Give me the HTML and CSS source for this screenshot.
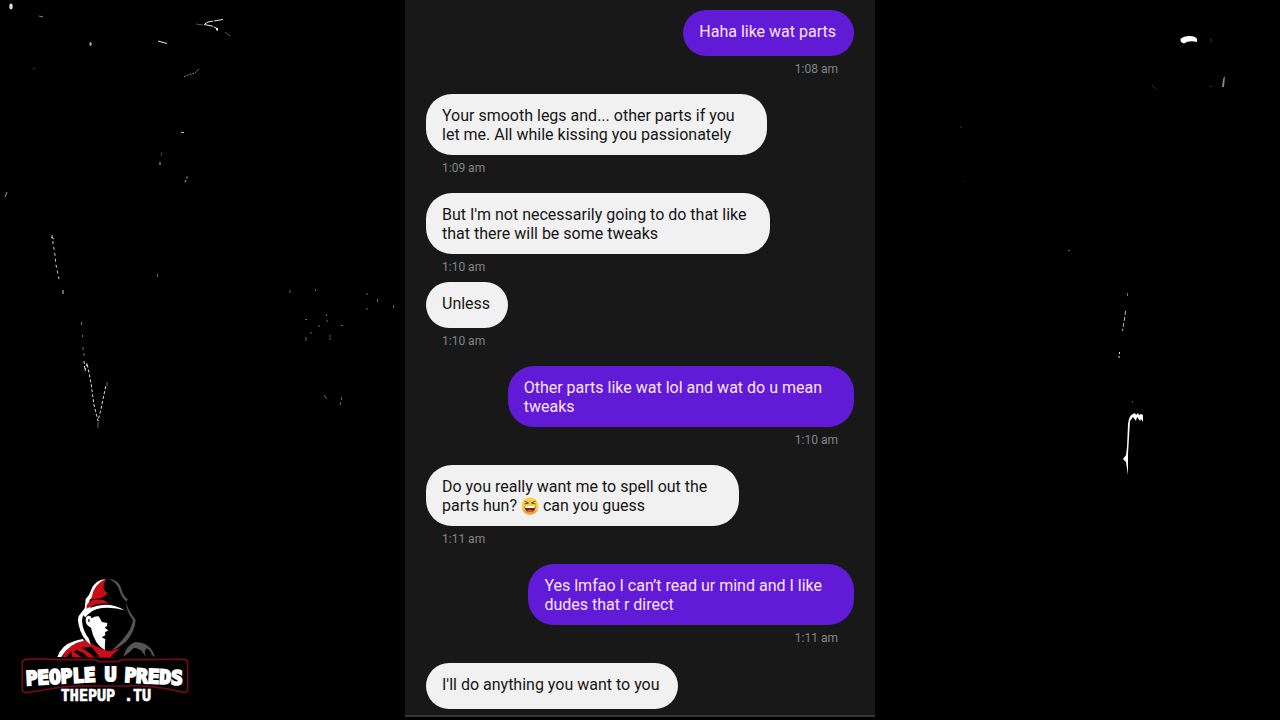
FILE: index.html
```
<!DOCTYPE html>
<html lang="en">
<head>
    <meta charset="UTF-8">
    <meta name="viewport" content="width=device-width, initial-scale=1.0">
    <title>People U Preds</title>
    <link rel="stylesheet" href="styles.css">
</head>
<body>
    <svg class="splatter" viewBox="0 0 1280 720" preserveAspectRatio="xMidYMin slice" aria-hidden="true">
        <!-- left side -->
        <ellipse cx="11" cy="6.500" rx="1.700" ry="3" fill="#ddd"/>
        <path d="M39 16l4 1" stroke="#888"/>
        <ellipse cx="90.500" cy="44" rx="1.200" ry="2" fill="#aaa"/>
        <path d="M158 41l9 2.500" stroke="#eee"/>
        <path d="M33 70l2-3" stroke="#333"/>
        <path d="M223 19.500l-15 2.500-4 2.500 8 1.500 6 3" stroke="#eee" stroke-dasharray="9 1"/>
        <path d="M196 24l7 1M225 32l5 4" stroke="#555"/>
        <path d="M216 28l2 0 0 3-2-1z" fill="#eee"/>
        <path d="M184 77l4-2 7-2 4-4" stroke="#888" stroke-dasharray="2 1"/>
        <path d="M181 132.500h3M160 162v3M187 176.500v2M185 182l1-2" stroke="#bbb"/>
        <path d="M161 156l1-4" stroke="#444"/>
        <path d="M5 197l2-5" stroke="#999"/>
        <path d="M52 235l1 8 2 12 1 10 3 14" stroke="#ccc" stroke-dasharray="3 3"/>
        <path d="M51 237l3 2M63 290v4" stroke="#ccc"/>
        <path d="M81.500 322v3M82.500 335v2M83 347v3M84 353v3" stroke="#777"/>
        <path d="M84 361l1 10 2-8 4 20 3 22 4 16 3-12 5-24" stroke="#ddd" stroke-dasharray="3 2"/>
        <path d="M98 422v6M107 382v4" stroke="#666"/>
        <path d="M157.500 274v3M290 290v3M315.500 289v2M305 319.500h2M326.500 314v2M327 320v2M318 326h2M341 325.500h2M311 332v2M306 337v4M329 336h2M329 339h2M367 293v2M377.500 299v3M393.500 305v3M366 309h2M324 395l3 4M341.500 397v3M340.500 402v3" stroke="#666"/>
        <!-- right side -->
        <path d="M1180.500 39q3-3 9-3 6 0 7.500 3v3q-8-2-13 1.500-4-1-3.500-4.500z" fill="#fff"/>
        <path d="M1211 38v5M1152 85l4 4M1209 86l3 1M963 181v1M960 127h2" stroke="#333"/>
        <path d="M1222 87l1-8 2-3-1 11z" fill="#888"/>
        <path d="M1068 250l2 1M1127.500 293v3" stroke="#777"/>
        <path d="M1125.500 311l-1 8-2 12" stroke="#bbb" stroke-dasharray="4 2"/>
        <path d="M1119.500 352v2M1118 357h2" stroke="#ddd"/>
        <path d="M1132.500 401v2" stroke="#444"/>
        <path d="M1128 424q1-9 5-10l2-1 1 2 2-2 1 2 2-1 2 1v7l-2-3-1 2-3-4-1 4-3-4-3 4q-1 16-2 33v21l-2-13-3-3 3-4 1-8z" fill="#fff"/>
    </svg>
    <main class="page">
        <aside class="brand">
            <svg class="logo" viewBox="0 0 570 420" role="img" aria-label="People U Preds">
                <!-- cloak -->
                <path fill="#c80d16" d="M158 261q12-35 60-48l12-2q28 22 60 31l13 2 34-12-26 31z"/>
                <path fill="#000" d="M170 262l13-20 4 20zM192 246l23 16h18l-12-12-22-10zM213 232l26 17 14 13h16l-24-31zM300 262l30-28 12-4-22 32z"/>
                <path fill="#fff" d="M142 261q12-36 52-48 14-5 25-6l3 5q-46 9-68 49z"/>
                <path fill="#555" d="M340 260q8-34 35-44 22 0 38 11 17 13 22 35l-10-8q-3-13-15-19-8 8-5 17l5 11-17-22q-15-9-23-7-7 11-30 26z"/>
                <!-- hood -->
                <path fill="#000" d="M245 63l44-35 39 30 21 38 27 55-17 50-59 41-53-20-37-60 2-35z"/>
                <path fill="#c80d16" d="M288 29q-17 26 5 41-20 22-54 17-14 7-2-9 14-40 51-49z"/>
                <path fill="#fff" d="M288 27q-34 2-45 34-4 15-16 26l-3 28-18 23q-5 12 0 26 8 40 36 60l-5-18q-19-23-21-53 0-18 16-29 12-9 9-16l-6-6q4-14 10-20 6-40 43-55z"/>
                <path fill="#c80d16" d="M230 105l12-13q24-7 40-1l15 10q-38-3-67 15z"/>
                <path fill="#fff" d="M218 134q20-28 65-30 38 0 60 17-28-10-67-7-30 3-50 28z"/>
                <path fill="#555" d="M296 27q31 2 38 30 3 17 19 31l-4 7q-16-14-22-38-7-20-31-30zM347 98q10 27 30 52-3 35-27 63-21 20-47 30 40-35 58-67 6-14 8-25-18-24-22-53z"/>
                <!-- face -->
                <path fill="#fff" d="M228 142q4-6 13-4l4 7q9-7 21-6l10 17 16 3-1 9-7 5 11 8-10 6 1 9-11 6 11 6q-2 22-1 32-18-10-26-24l-10-20-6-23q-20-8-15-31z"/>
                <path fill="#000" d="M235 148q3-3 4 2l-1 7-3-2z"/>
                <!-- wordmark -->
                <path class="logo-plate" d="M47 268q48-3 100 1h106q8 0 14 6h58q6-6 16-6h75q60-2 108-1 9 2 9 12v77q-1 12-12 10-50-12-96-17-35-4-84-2h-92q-44-2-86 3-50 6-112 17-14 1-14-12v-76q0-10 10-12z"/>
                <text class="logo-name" x="152" y="340" transform="rotate(-3 152 320)">PEOPLE</text>
                <text class="logo-name" x="302" y="332">U</text>
                <text class="logo-name" x="431" y="340" transform="rotate(3 431 320)">PREDS</text>
                <text class="logo-site" x="288" y="394">THEPUP .TU</text>
            </svg>
        </aside>
        <section class="chat">
            <div class="message sent">
                <p class="bubble">Haha like wat parts</p>
                <time class="time">1:08 am</time>
            </div>
            <div class="message">
                <p class="bubble loose">Your smooth legs and... other parts if you<br>let me. All while kissing you passionately</p>
                <time class="time">1:09 am</time>
            </div>
            <div class="message grouped">
                <p class="bubble wide">But I'm not necessarily going to do that like<br>that there will be some tweaks</p>
                <time class="time">1:10 am</time>
            </div>
            <div class="message">
                <p class="bubble">Unless</p>
                <time class="time">1:10 am</time>
            </div>
            <div class="message sent">
                <p class="bubble loose">Other parts like wat lol and wat do u mean<br>tweaks</p>
                <time class="time">1:10 am</time>
            </div>
            <div class="message">
                <p class="bubble loose">Do you really want me to spell out the<br>parts hun? <svg class="emoji" viewBox="0 0 36 36" role="img" aria-label="laughing">
                    <circle cx="18" cy="18" r="17" fill="#f9cf4a"/>
                    <path d="M2 24a17 17 0 0 0 32 0q-16 12-32 0z" fill="#eaa437"/>
                    <path d="M7 18h22q0 12-11 12T7 18z" fill="#6b2418"/>
                    <path d="M8 18h20l-1 4H9z" fill="#fff"/>
                    <path d="M12 28q6-5 12 0-6 4-12 0z" fill="#ef5148"/>
                    <path d="M7 8l8 4-8 2M29 8l-8 4 8 2" fill="none" stroke="#6b4220" stroke-width="2"/>
                </svg> can you guess</p>
                <time class="time">1:11 am</time>
            </div>
            <div class="message sent">
                <p class="bubble loose">Yes lmfao I can’t read ur mind and I like<br>dudes that r direct</p>
                <time class="time">1:11 am</time>
            </div>
            <div class="message">
                <p class="bubble">I'll do anything you want to you</p>
            </div>
        </section>
    </main>
</body>
</html>
```

FILE: styles.css
```
* {
    box-sizing: border-box;
}
body {
    margin: 0;
    background-color: #000;
    font-family: Roboto, "Liberation Sans", sans-serif;
}
.splatter {
    position: absolute;
    top: 0;
    left: 0;
    width: 100%;
    height: 100%;
    z-index: -1;
    fill: none;
}
.page {
    display: grid;
    grid-template-columns: 1fr minmax(auto, 470px) 1fr;
    min-height: 100vh;
}
.brand {
    display: flex;
    align-items: flex-end;
    padding: 10px;
}
.logo {
    width: 190px;
}
.logo-plate {
    fill: #000;
    stroke: #6e0c1a;
    stroke-width: 5px;
}
.logo-name {
    fill: #fff;
    stroke: #fff;
    stroke-width: 6px;
    font-family: "DejaVu Sans Mono", monospace;
    font-size: 58px;
    font-weight: bold;
    text-anchor: middle;
}
.logo-site {
    fill: #fff;
    stroke: #fff;
    stroke-width: 2px;
    font-family: "DejaVu Sans Mono", monospace;
    font-size: 45px;
    font-weight: bold;
    text-anchor: middle;
}
.chat {
    display: flex;
    flex-direction: column;
    gap: 17px;
    padding: 10px 21px 6px;
    background-color: #181818;
    border-bottom: 2px solid #363636;
    margin-bottom: 3px;
}
.message {
    display: flex;
    flex-direction: column;
    align-items: flex-start;
}
.grouped {
    margin-bottom: -10px;
}
.sent {
    align-items: flex-end;
}
.bubble {
    min-height: 46px;
    margin: 0;
    padding: 12px 18px 11px 16px;
    border-radius: 26px;
    background-color: #f1f1f1;
    color: #161616;
    font-size: 16px;
    line-height: 19px;
}
.wide {
    padding-right: 23px;
}
.loose {
    padding-right: 32px;
}
.sent .bubble {
    background-color: #611ad5;
    color: #fbe3ff;
}
.time {
    margin-top: 5px;
    padding: 0 16px;
    color: #858585;
    font-size: 12px;
    line-height: 16px;
}
.emoji {
    width: 18px;
    height: 18px;
    vertical-align: -4px;
}
```
